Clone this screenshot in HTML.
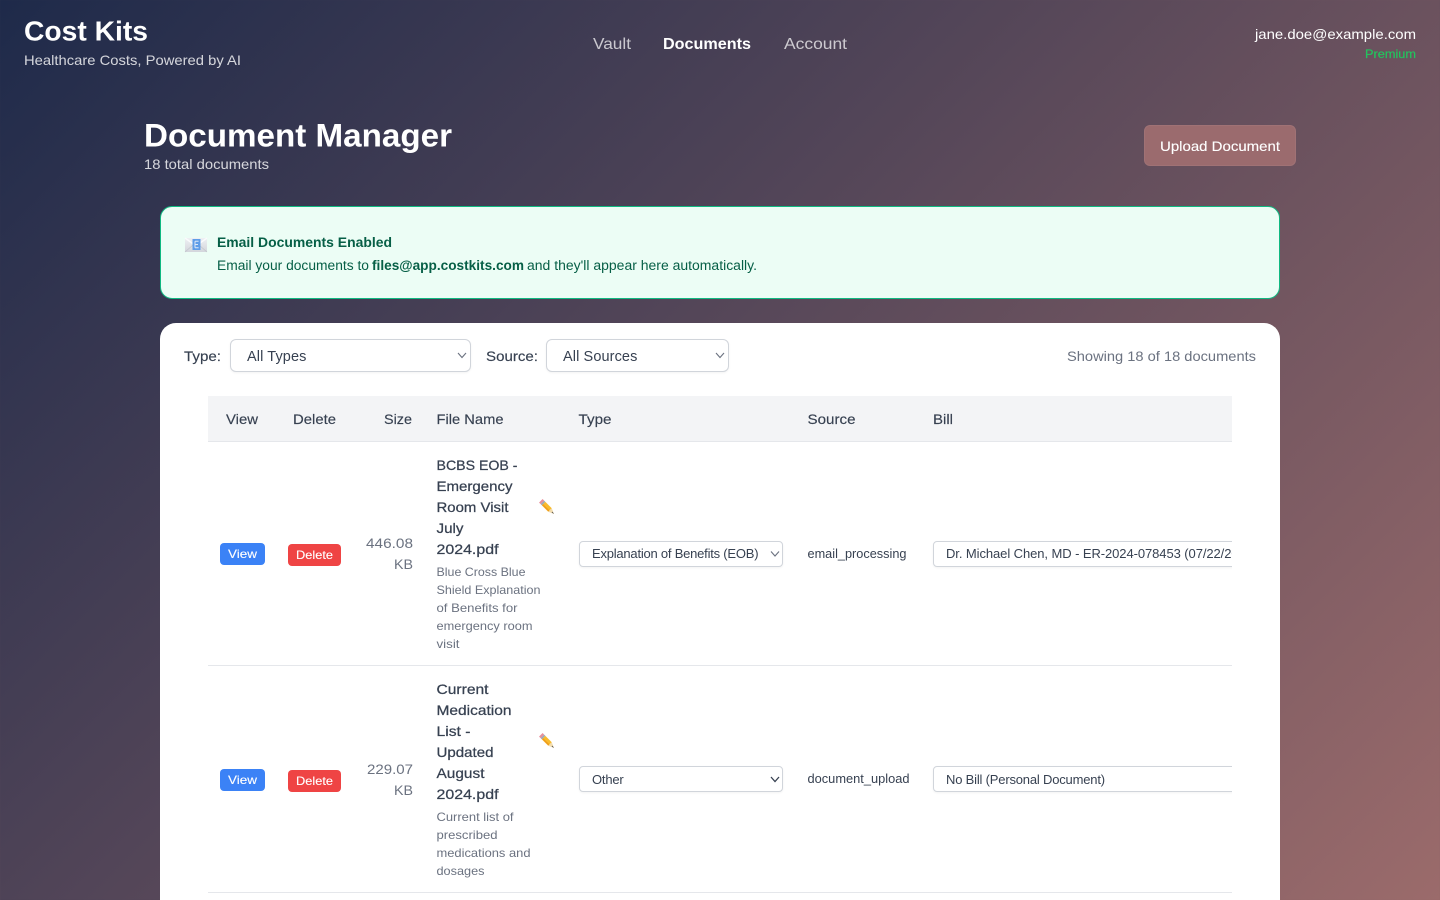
<!DOCTYPE html>
<html lang="en">
<head>
<meta charset="utf-8">
<title>Cost Kits - Document Manager</title>
<style>
*{box-sizing:border-box}
html,body{margin:0;padding:0;width:1440px;height:900px;overflow:hidden}
body{position:relative;background:linear-gradient(135deg,#1e2a4a 0%,#9b6b6b 100%);font-family:"Liberation Sans",sans-serif}
.box{position:absolute}
.upload{left:1143.5px;top:125px;width:152.5px;height:41px;background:#9b6b6e;border:1px solid rgba(255,255,255,.05);border-radius:6px}
.banner{left:160px;top:206px;width:1120px;height:93px;background:#ecfdf5;border:1px solid #10b981;border-radius:12px}
.card{left:160px;top:323px;width:1120px;height:600px;background:#fff;border-radius:16px}
.thead{left:208px;top:396px;width:1024px;height:46px;background:#f3f4f6;border-bottom:1px solid #e5e7eb}
.rule{left:208px;width:1024px;height:1px;background:#e5e7eb}
.btn{border-radius:4px}
.blue{background:#3b82f6;width:45px;height:22px}
.red{background:#ef4444;width:53px;height:22px}
select{position:absolute;margin:0;-webkit-appearance:none;appearance:none;background-color:#fff;border:1px solid #d1d5db;color:#374151;font-family:"Liberation Sans",sans-serif;box-shadow:0 1px 2px rgba(0,0,0,.05)}
.f{height:33px;top:339px;padding:2px 16px 0;font-size:14.5px;letter-spacing:.1px;border-radius:6px}
.r{height:26px;padding:0 12px;font-size:13px;letter-spacing:-.08px;border-radius:4px}
.clip{position:absolute;left:208px;top:442px;width:1024px;height:450px;overflow:hidden}
svg.txt{position:absolute;left:0;top:0;width:1440px;height:900px;font-family:"Liberation Sans",sans-serif}
.w{fill:#fff}.a{fill:rgba(255,255,255,.8)}.n{fill:rgba(255,255,255,.72)}
.s14{font-size:14px}.s12{font-size:12px}.s16{font-size:16px}
.b{font-weight:700}
.h{fill:#374151;stroke:#374151;stroke-width:.15;font-size:14px}
.fn{fill:#374151;stroke:#374151;stroke-width:.25;font-size:14px}
.d{fill:#6b7280;font-size:12px}
.g{fill:#6b7280;font-size:14px}
.m{fill:#065f46}
.md{stroke:#fff;stroke-width:.12}
.chev{fill:none;stroke:#6b7280;stroke-width:1.1}
</style>
</head>
<body>
<div class="box upload"></div>
<div class="box banner"></div>
<div class="box card"></div>
<select class="f" style="left:230px;width:241px"><option>All Types</option></select>
<select class="f" style="left:546px;width:183px"><option>All Sources</option></select>
<div class="box thead"></div>
<div class="box rule" style="top:665px"></div>
<div class="box rule" style="top:892px"></div>
<div class="box btn blue" style="left:220px;top:543px"></div>
<div class="box btn red" style="left:288px;top:544px"></div>
<div class="box btn blue" style="left:220px;top:769px"></div>
<div class="box btn red" style="left:288px;top:770px"></div>
<div class="clip">
<select class="r" style="left:371px;top:99px;width:204px;padding-bottom:1px;letter-spacing:-.22px"><option>Explanation of Benefits (EOB)</option></select>
<select class="r" style="left:725px;top:99px;width:620px;padding-bottom:1px"><option>Dr. Michael Chen, MD - ER-2024-078453 (07/22/2024) - $2,450.00</option></select>
<select class="r" style="left:371px;top:324px;width:204px;letter-spacing:-.2px"><option>Other</option></select>
<select class="r" style="left:725px;top:324px;width:620px;letter-spacing:-.19px"><option>No Bill (Personal Document)</option></select>
</div>
<svg class="txt" viewBox="0 0 1440 900" xmlns="http://www.w3.org/2000/svg">
<defs>
<linearGradient id="env" x1="0" y1="0" x2="0" y2="1"><stop offset="0" stop-color="#eef0f3"/><stop offset="1" stop-color="#d3d6dc"/></linearGradient>
<g id="pencil">
<line x1="1.8" y1="1.8" x2="3.4" y2="3.4" stroke="#e88f9b" stroke-width="5"/>
<line x1="3.4" y1="3.4" x2="4.6" y2="4.6" stroke="#9aa8b8" stroke-width="5"/>
<line x1="4.6" y1="4.6" x2="11" y2="11" stroke="#f8bb2d" stroke-width="5"/>
<line x1="3.6" y1="5.6" x2="10" y2="12" stroke="#ee9a1c" stroke-width="1.4"/>
<polygon points="12.77,9.23 9.23,12.77 15,15" fill="#f2dcae"/>
<polygon points="13.5,12.6 12.6,13.5 15,15" fill="#555"/>
</g>
</defs>
<!-- chevrons -->
<polyline class="chev" points="458,353 462,357.5 466,353"/>
<polyline class="chev" points="716,353 720,357.5 724,353"/>
<polyline class="chev" points="771,551.5 775,556 779,551.5"/>
<polyline class="chev" style="stroke:#374151;stroke-width:1.3" points="771,777 775,781.5 779,777"/>
<!-- envelope -->
<rect x="185" y="238" width="22" height="14" fill="url(#env)"/>
<polyline points="185,238 196,246 207,238" fill="none" stroke="#fafbfc" stroke-width="1.4"/>
<line x1="185" y1="252" x2="193" y2="245" stroke="#c2c5cc" stroke-width=".8"/>
<line x1="207" y1="252" x2="199" y2="245" stroke="#c2c5cc" stroke-width=".8"/>
<rect x="192.5" y="239" width="8" height="11" fill="#5f9de8"/>
<path d="M195 241.3h3.6M195 244.5h3M195 247.7h3.6M195 241.3v6.4" fill="none" stroke="#dbe8f8" stroke-width="1"/>
<!-- pencils -->
<use href="#pencil" transform="translate(539 499)"/>
<use href="#pencil" transform="translate(539 733)"/>
<text x="24" y="40.5" textLength="124" lengthAdjust="spacingAndGlyphs" class="w b" font-size="28">Cost Kits</text>
<text x="24" y="65" textLength="217" lengthAdjust="spacingAndGlyphs" class="a s14">Healthcare Costs, Powered by AI</text>
<text x="593" y="49" textLength="38" lengthAdjust="spacingAndGlyphs" class="n s16">Vault</text>
<text x="663" y="49" textLength="88" lengthAdjust="spacingAndGlyphs" class="w b s16">Documents</text>
<text x="784" y="49" textLength="63" lengthAdjust="spacingAndGlyphs" class="n s16">Account</text>
<text x="1255" y="39" textLength="161" lengthAdjust="spacingAndGlyphs" class="w s14">jane.doe@example.com</text>
<text x="1365" y="58" textLength="51" lengthAdjust="spacingAndGlyphs" fill="#22c55e" stroke="#22c55e" stroke-width=".2" class="s12">Premium</text>
<text x="144" y="146.5" textLength="308" lengthAdjust="spacingAndGlyphs" class="w b" font-size="32">Document Manager</text>
<text x="144" y="169" textLength="125" lengthAdjust="spacingAndGlyphs" class="a s14">18 total documents</text>
<text x="1160" y="151" textLength="120" lengthAdjust="spacingAndGlyphs" class="w s14 md">Upload Document</text>
<text x="217" y="247" textLength="175" lengthAdjust="spacingAndGlyphs" class="m b s14">Email Documents Enabled</text>
<text x="217" y="270" textLength="152" lengthAdjust="spacingAndGlyphs" class="m" font-size="13.5">Email your documents to</text>
<text x="372" y="270" textLength="152" lengthAdjust="spacingAndGlyphs" class="m b" font-size="13.5">files@app.costkits.com</text>
<text x="527" y="270" textLength="230" lengthAdjust="spacingAndGlyphs" class="m" font-size="13.5">and they'll appear here automatically.</text>
<text x="184" y="361" textLength="37" lengthAdjust="spacingAndGlyphs" class="h">Type:</text>
<text x="486" y="361" textLength="52" lengthAdjust="spacingAndGlyphs" class="h">Source:</text>
<text x="1067" y="361" textLength="189" lengthAdjust="spacingAndGlyphs" class="g">Showing 18 of 18 documents</text>
<text x="226" y="424" textLength="32" lengthAdjust="spacingAndGlyphs" class="h">View</text>
<text x="293" y="424" textLength="43" lengthAdjust="spacingAndGlyphs" class="h">Delete</text>
<text x="384" y="424" textLength="28" lengthAdjust="spacingAndGlyphs" class="h">Size</text>
<text x="436.5" y="424" textLength="67" lengthAdjust="spacingAndGlyphs" class="h">File Name</text>
<text x="578.5" y="424" textLength="33" lengthAdjust="spacingAndGlyphs" class="h">Type</text>
<text x="807.5" y="424" textLength="48" lengthAdjust="spacingAndGlyphs" class="h">Source</text>
<text x="933" y="424" textLength="20" lengthAdjust="spacingAndGlyphs" class="h">Bill</text>
<text x="228" y="558" textLength="29" lengthAdjust="spacingAndGlyphs" class="w s12 md">View</text>
<text x="296" y="559" textLength="37" lengthAdjust="spacingAndGlyphs" class="w s12 md">Delete</text>
<text x="366" y="548" textLength="47" lengthAdjust="spacingAndGlyphs" class="g">446.08</text>
<text x="394" y="569" textLength="19" lengthAdjust="spacingAndGlyphs" class="g">KB</text>
<text x="436.5" y="470" textLength="81" lengthAdjust="spacingAndGlyphs" class="fn">BCBS EOB -</text>
<text x="436.5" y="491" textLength="76" lengthAdjust="spacingAndGlyphs" class="fn">Emergency</text>
<text x="436.5" y="512" textLength="72" lengthAdjust="spacingAndGlyphs" class="fn">Room Visit</text>
<text x="436.5" y="533" textLength="27" lengthAdjust="spacingAndGlyphs" class="fn">July</text>
<text x="436.5" y="554" textLength="62" lengthAdjust="spacingAndGlyphs" class="fn">2024.pdf</text>
<text x="436.5" y="576" textLength="89" lengthAdjust="spacingAndGlyphs" class="d">Blue Cross Blue</text>
<text x="436.5" y="594" textLength="104" lengthAdjust="spacingAndGlyphs" class="d">Shield Explanation</text>
<text x="436.5" y="612" textLength="81" lengthAdjust="spacingAndGlyphs" class="d">of Benefits for</text>
<text x="436.5" y="630" textLength="96" lengthAdjust="spacingAndGlyphs" class="d">emergency room</text>
<text x="436.5" y="648" textLength="23" lengthAdjust="spacingAndGlyphs" class="d">visit</text>
<text x="807.5" y="558" textLength="99" lengthAdjust="spacingAndGlyphs" fill="#374151" font-size="12.5">email_processing</text>
<text x="228" y="784" textLength="29" lengthAdjust="spacingAndGlyphs" class="w s12 md">View</text>
<text x="296" y="785" textLength="37" lengthAdjust="spacingAndGlyphs" class="w s12 md">Delete</text>
<text x="367" y="774" textLength="46" lengthAdjust="spacingAndGlyphs" class="g">229.07</text>
<text x="394" y="795" textLength="19" lengthAdjust="spacingAndGlyphs" class="g">KB</text>
<text x="436.5" y="694" textLength="52" lengthAdjust="spacingAndGlyphs" class="fn">Current</text>
<text x="436.5" y="715" textLength="75" lengthAdjust="spacingAndGlyphs" class="fn">Medication</text>
<text x="436.5" y="736" textLength="34" lengthAdjust="spacingAndGlyphs" class="fn">List -</text>
<text x="436.5" y="757" textLength="57" lengthAdjust="spacingAndGlyphs" class="fn">Updated</text>
<text x="436.5" y="778" textLength="48" lengthAdjust="spacingAndGlyphs" class="fn">August</text>
<text x="436.5" y="799" textLength="62" lengthAdjust="spacingAndGlyphs" class="fn">2024.pdf</text>
<text x="436.5" y="821" textLength="77" lengthAdjust="spacingAndGlyphs" class="d">Current list of</text>
<text x="436.5" y="839" textLength="61" lengthAdjust="spacingAndGlyphs" class="d">prescribed</text>
<text x="436.5" y="857" textLength="94" lengthAdjust="spacingAndGlyphs" class="d">medications and</text>
<text x="436.5" y="875" textLength="48" lengthAdjust="spacingAndGlyphs" class="d">dosages</text>
<text x="807.5" y="783" textLength="102" lengthAdjust="spacingAndGlyphs" fill="#374151" font-size="12.5">document_upload</text>
</svg>
</body>
</html>
